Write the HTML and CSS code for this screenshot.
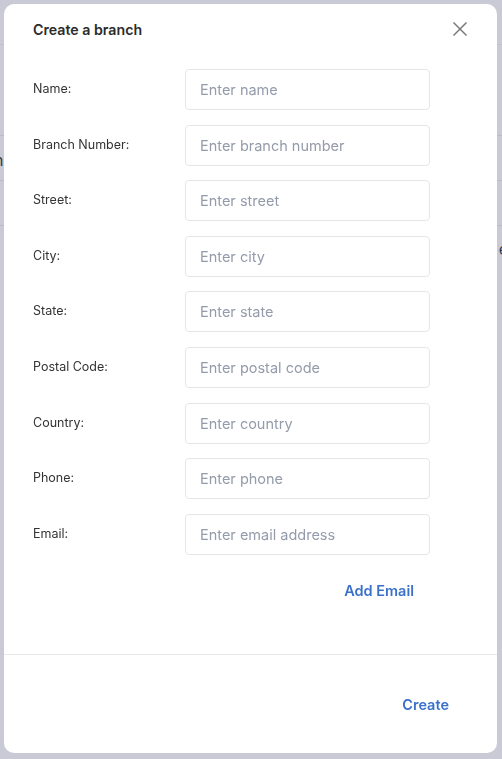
FILE: index.html
```html
<!DOCTYPE html>
<html lang="en">
<head>
<meta charset="utf-8">
<title>Create a branch</title>
<link rel="stylesheet" href="styles.css">
</head>
<body>
<div class="backdrop-page">
  <div class="bg-row bg-row-first"></div>
  <div class="bg-row bg-row-tall"><span class="bg-cell-left">n</span></div>
  <div class="bg-row"></div>
  <div class="bg-row"><span class="bg-cell-right">e</span></div>
</div>

<div class="modal" role="dialog" aria-labelledby="modal-title">
  <div class="modal-header">
    <h2 id="modal-title" class="modal-title">Create a branch</h2>
    <button class="close-btn" aria-label="Close">
      <svg width="14" height="14" viewBox="0 0 14 14" fill="none" stroke="#7a7a7a" stroke-width="1.5" stroke-linecap="square">
        <path d="M1 1 L13 13 M13 1 L1 13"/>
      </svg>
    </button>
  </div>

  <form class="modal-body">
    <div class="form-grid">
      <label class="field-label" for="f-name">Name:</label>
      <input class="field-input" id="f-name" placeholder="Enter name">

      <label class="field-label" for="f-num">Branch Number:</label>
      <input class="field-input" id="f-num" placeholder="Enter branch number">

      <label class="field-label" for="f-street">Street:</label>
      <input class="field-input" id="f-street" placeholder="Enter street">

      <label class="field-label" for="f-city">City:</label>
      <input class="field-input" id="f-city" placeholder="Enter city">

      <label class="field-label" for="f-state">State:</label>
      <input class="field-input" id="f-state" placeholder="Enter state">

      <label class="field-label" for="f-postal">Postal Code:</label>
      <input class="field-input" id="f-postal" placeholder="Enter postal code">

      <label class="field-label" for="f-country">Country:</label>
      <input class="field-input" id="f-country" placeholder="Enter country">

      <label class="field-label" for="f-phone">Phone:</label>
      <input class="field-input" id="f-phone" placeholder="Enter phone">

      <label class="field-label" for="f-email">Email:</label>
      <input class="field-input" id="f-email" placeholder="Enter email address">
    </div>
    <div class="add-row">
      <button type="button" class="link-btn">Add Email</button>
    </div>
  </form>

  <div class="modal-footer">
    <button type="button" class="link-btn">Create</button>
  </div>
</div>
</body>
</html>
```

FILE: styles.css
```css
* { box-sizing: border-box; }

html, body {
  margin: 0;
  padding: 0;
  height: 100%;
}

body {
  background: #c9cad6;
  font-family: Inter, "Noto Sans", sans-serif;
  color: #333;
  overflow: hidden;
}

.backdrop-page {
  padding-top: 44px;
}

.bg-row {
  height: 45px;
  border-top: 1px solid #b9bbc7;
  position: relative;
  font-size: 16px;
  color: #3a3a44;
}

.bg-row-first {
  height: 91px;
  border-top-color: #bec0cc;
}

.bg-cell-left {
  position: absolute;
  left: -6px;
  top: 14px;
}

.bg-cell-right {
  position: absolute;
  right: -6px;
  top: 13px;
}

.modal {
  position: fixed;
  left: 4px;
  top: 4px;
  width: 493px;
  height: 749px;
  background: #fff;
  border-radius: 10px;
  display: flex;
  flex-direction: column;
}

.modal-header {
  display: flex;
  align-items: center;
  justify-content: space-between;
  padding: 0 30px 0 29px;
  height: 52px;
}

.modal-title {
  margin: 0;
  font-size: 14.2px;
  font-weight: 600;
  color: #2b2b2b;
  line-height: 20px;
}

.close-btn {
  background: none;
  border: 0;
  padding: 0;
  width: 14px;
  height: 14px;
  margin-top: -3px;
  cursor: pointer;
  display: flex;
}

.modal-body {
  padding: 13px 67px 0 29px;
  flex: 1;
}

.form-grid {
  display: grid;
  grid-template-columns: 152px 245px;
  grid-auto-rows: 41px;
  row-gap: 14.6px;
}

.field-label {
  font-size: 12.5px;
  line-height: 16px;
  color: #333;
  padding-top: 12px;
}

.field-input {
  height: 41px;
  width: 245px;
  border: 1px solid #e4e6ea;
  border-radius: 4px;
  padding: 0 14px;
  font-family: inherit;
  font-size: 14.5px;
  color: #333;
  outline: none;
}

.field-input::placeholder {
  color: #949baa;
}

.add-row {
  display: flex;
  justify-content: flex-end;
  padding-top: 27px;
  padding-right: 16px;
}

.link-btn {
  background: none;
  border: 0;
  padding: 0;
  font-family: inherit;
  font-size: 14.5px;
  font-weight: 600;
  color: #3b71ca;
  line-height: 18px;
  cursor: pointer;
}

.modal-footer {
  border-top: 1px solid #e8e8ea;
  height: 99px;
  display: flex;
  justify-content: flex-end;
  align-items: flex-start;
  padding: 41px 48px 0 0;
}
```
